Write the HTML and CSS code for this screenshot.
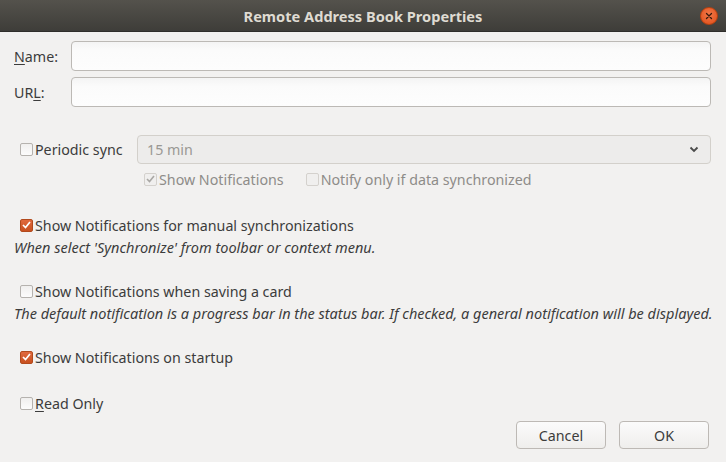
FILE: index.html
```html
<!DOCTYPE html>
<html>
<head>
<meta charset="utf-8">
<link rel="stylesheet" href="styles.css">
</head>
<body>
<div class="window">
  <div class="titlebar">
    <span class="title">Remote Address Book Properties</span>
    <span class="close"><svg width="10" height="10" viewBox="0 0 10 10"><path d="M2.5 2.5 L7.5 7.5 M7.5 2.5 L2.5 7.5" stroke="#3a1a0c" stroke-width="1.3" stroke-linecap="round"/></svg></span>
  </div>
  <div class="content">
    <div class="field first">
      <label class="flabel"><u>N</u>ame:</label>
      <div class="input"></div>
    </div>
    <div class="field">
      <label class="flabel">UR<u>L</u>:</label>
      <div class="input"></div>
    </div>

    <div class="periodic">
      <div class="check"><span class="box"></span><span>Periodic sync</span></div>
      <div class="select"><span>15 min</span>
        <svg width="10" height="7" viewBox="0 0 10 7"><path d="M1.5 1.5 L5 5 L8.5 1.5" fill="none" stroke="#4a4a4a" stroke-width="1.8"/></svg>
      </div>
    </div>
    <div class="subrow">
      <div class="check disabled"><span class="box checked-dis"><svg width="9" height="8" viewBox="0 0 9 8"><path d="M1 4 L3.5 6.5 L8 1" fill="none" stroke="#a9a7a4" stroke-width="1.6"/></svg></span><span>Show Notifications</span></div>
      <div class="check disabled"><span class="box"></span><span>Notify only if data synchronized</span></div>
    </div>

    <div class="check manual"><span class="box checked"><svg width="9" height="8" viewBox="0 0 9 8"><path d="M1 4 L3.5 6.5 L8 1" fill="none" stroke="#fff" stroke-width="1.7"/></svg></span><span>Show Notifications for manual synchronizations</span></div>
    <div class="note">When select 'Synchronize' from toolbar or context menu.</div>

    <div class="check saving"><span class="box"></span><span>Show Notifications when saving a card</span></div>
    <div class="note">The default notification is a progress bar in the status bar. If checked, a general notification will be displayed.</div>

    <div class="check startup"><span class="box checked"><svg width="9" height="8" viewBox="0 0 9 8"><path d="M1 4 L3.5 6.5 L8 1" fill="none" stroke="#fff" stroke-width="1.7"/></svg></span><span>Show Notifications on startup</span></div>

    <div class="bottom">
      <div class="check readonly"><span class="box"></span><span><u>R</u>ead Only</span></div>
      <div class="buttons">
        <div class="btn">Cancel</div>
        <div class="btn">OK</div>
      </div>
    </div>
  </div>
</div>
</body>
</html>
```
FILE: styles.css
```css
* { box-sizing: border-box; }
html, body { margin: 0; padding: 0; }
body {
  width: 726px;
  height: 462px;
  overflow: hidden;
  background: #f2f1f0;
  font-family: "Noto Sans", "Open Sans", sans-serif;
  font-size: 14.25px;
  color: #3c3c3c;
}
.window { width: 726px; height: 462px; display: flex; flex-direction: column; }
.titlebar {
  height: 32px;
  background: linear-gradient(#54524c, #3e3d39);
  display: flex;
  align-items: center;
  justify-content: center;
  position: relative;
  border-bottom: 1px solid #2f2e2b;
}
.title {
  color: #dfdbd2;
  font-weight: bold;
  font-size: 14.6px;
  font-family: "Noto Sans", sans-serif;
}
.close {
  position: absolute;
  right: 8px;
  top: 7px;
  width: 18px;
  height: 18px;
  border-radius: 50%;
  background: radial-gradient(circle at 50% 40%, #f27a4a, #df4b16);
  border: 1px solid #b8410f;
  display: flex;
  align-items: center;
  justify-content: center;
}
.content { padding: 9px 15px 0 14px; flex: 1; display: flex; flex-direction: column; }
.field { display: flex; align-items: center; height: 30px; margin-top: 6px; }
.field.first { margin-top: 0; }
.flabel { width: 57px; }
.input {
  flex: 1;
  height: 30px;
  border: 1px solid #bcb9b5;
  border-radius: 4px;
  background: linear-gradient(#f4f4f4, #fbfbfb 30%, #fdfdfd);
}
.periodic { display: flex; align-items: center; margin-top: 28px; height: 29px; padding-left: 6px; }
.periodic .check { width: 117px; }
.select {
  flex: 1;
  height: 29px;
  border: 1px solid #d3d0cb;
  border-radius: 4px;
  background: #edeceb;
  display: flex;
  align-items: center;
  justify-content: space-between;
  padding: 0 11px 0 9px;
  color: #9a9894;
}
.check { display: flex; align-items: center; gap: 2px; }
.box {
  width: 13px;
  height: 13px;
  border: 1px solid #b5b2ae;
  border-radius: 2px;
  background: linear-gradient(#f0efee, #fcfcfc);
  display: flex;
  align-items: center;
  justify-content: center;
  flex: none;
}
.box.checked {
  background: linear-gradient(#e0693d, #c8501f);
  border-color: #b24a1d;
}
.box.checked-dis { background: #eeedec; border-color: #d0cdca; }
.disabled { color: #8e8c89; }
.disabled .box { border-color: #d4d1cd; background: #f0efee; }
.subrow { display: flex; align-items: center; gap: 22px; padding-left: 130px; height: 20px; margin-top: 5px; }
.manual { margin-top: 26px; height: 20px; padding-left: 6px; }
.note { font-style: italic; font-size: 14.5px; height: 20px; line-height: 20px; margin-top: 2px; white-space: nowrap; }
.saving { margin-top: 24px; height: 20px; padding-left: 6px; }
.startup { margin-top: 24px; height: 20px; padding-left: 6px; }
.bottom { display: flex; align-items: flex-start; justify-content: space-between; margin-top: 26px; }
.readonly { height: 20px; padding-left: 6px; }
.buttons { display: flex; gap: 13px; margin-top: 28px; margin-right: 2px; }
.btn {
  width: 90px;
  height: 28px;
  border: 1px solid #bdb9b5;
  border-radius: 4px;
  background: linear-gradient(#fbfbfb, #efeeec);
  display: flex;
  align-items: center;
  justify-content: center;
}
u { text-decoration-thickness: 1px; text-underline-offset: 2px; }
```
